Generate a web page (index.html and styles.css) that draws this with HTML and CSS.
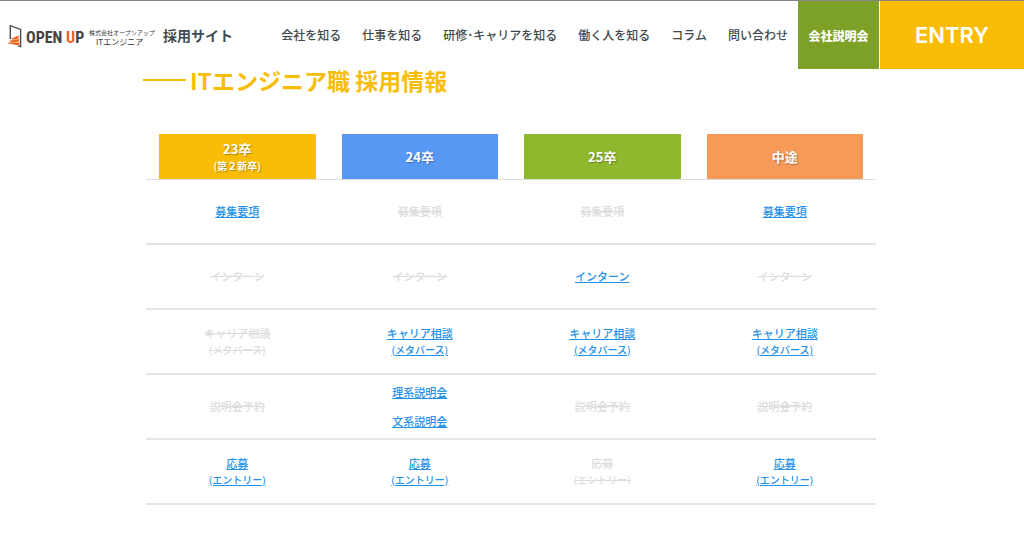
FILE: index.html
```html
<!DOCTYPE html>
<html lang="ja">
<head>
<meta charset="utf-8">
<meta name="viewport" content="width=device-width, initial-scale=1">
<title>ITエンジニア職 採用情報</title>
<link rel="stylesheet" href="styles.css">
</head>
<body>
<header class="header">
  <a class="brand" href="#">
    <svg class="brand-mark" viewBox="0 0 14 24" aria-hidden="true">
      <path d="M2.3 15V1.7L12.6 5.4V22.6L10 21.8" fill="none" stroke="#4a4a4c" stroke-width="1.4"/>
      <path d="M10.6 11.6V14.4L4.8 15.8L3.2 14.8Z" fill="#f0601e"/>
      <path d="M11 15V17.6L3.2 18.2L1.2 16.8Z" fill="#f0601e"/>
      <path d="M11.4 18.4V21.6L.2 19.6V18.6Z" fill="#f0601e"/>
    </svg>
    <span class="brand-name">OPEN <span class="brand-accent">U</span>P</span>
    <span class="company"><span class="company-top">株式会社オープンアップ</span><span class="company-bottom">ITエンジニア</span></span>
    <span class="site-name">採用サイト</span>
  </a>
  <nav class="nav">
    <a href="#">会社を知る</a>
    <a href="#">仕事を知る</a>
    <a href="#">研修･キャリアを知る</a>
    <a href="#">働く人を知る</a>
    <a href="#">コラム</a>
    <a href="#">問い合わせ</a>
  </nav>
  <a class="cta cta-session" href="#">会社説明会</a>
  <a class="cta cta-entry" href="#">ENTRY</a>
</header>
<main class="content">
  <h1 class="title">ITエンジニア職 採用情報</h1>
  <table class="jobs">
    <thead>
      <tr>
        <th scope="col"><div class="tab tab-yellow">23卒<small>(第２新卒)</small></div></th>
        <th scope="col"><div class="tab tab-blue">24卒</div></th>
        <th scope="col"><div class="tab tab-green">25卒</div></th>
        <th scope="col"><div class="tab tab-orange">中途</div></th>
      </tr>
    </thead>
    <tbody>
      <tr>
        <td><a href="#">募集要項</a></td>
        <td><s>募集要項</s></td>
        <td><s>募集要項</s></td>
        <td><a href="#">募集要項</a></td>
      </tr>
      <tr>
        <td><s>インターン</s></td>
        <td><s>インターン</s></td>
        <td><a href="#">インターン</a></td>
        <td><s>インターン</s></td>
      </tr>
      <tr>
        <td><s>キャリア相談<br><small>(メタバース)</small></s></td>
        <td><a href="#">キャリア相談<br><small>(メタバース)</small></a></td>
        <td><a href="#">キャリア相談<br><small>(メタバース)</small></a></td>
        <td><a href="#">キャリア相談<br><small>(メタバース)</small></a></td>
      </tr>
      <tr>
        <td><s>説明会予約</s></td>
        <td><div class="links"><a href="#">理系説明会</a><a href="#">文系説明会</a></div></td>
        <td><s>説明会予約</s></td>
        <td><s>説明会予約</s></td>
      </tr>
      <tr>
        <td><a href="#">応募<br><small>(エントリー)</small></a></td>
        <td><a href="#">応募<br><small>(エントリー)</small></a></td>
        <td><s>応募<br><small>(エントリー)</small></s></td>
        <td><a href="#">応募<br><small>(エントリー)</small></a></td>
      </tr>
    </tbody>
  </table>
</main>
</body>
</html>
```

FILE: styles.css
```css
* {
  box-sizing: border-box;
}

body {
  margin: 0;
  background: #fff;
  color: #3f4a50;
  font-family: "Noto Sans CJK JP", sans-serif;
  font-size: 12px;
}

.header {
  display: flex;
  align-items: stretch;
  min-height: 69px;
  border-top: 1px solid #858585;
  white-space: nowrap;
}

.header a {
  color: inherit;
  text-decoration: none;
}

.brand {
  display: flex;
  align-items: center;
  padding: 2px 0 0 8px;
}

.brand-mark {
  width: 14px;
  height: 24px;
  margin-right: 4px;
}

.brand-name {
  width: 63px;
  padding-top: 3px;
  color: #444;
  font: bold 16px "Liberation Sans Narrow", "Roboto Condensed", sans-serif;
}

.header .brand-accent {
  color: #f0601e;
}

.company {
  display: flex;
  flex-direction: column;
  width: 74px;
  padding-top: 2px;
  color: #333;
}

.company-top {
  font-size: 6px;
  line-height: 8px;
}

.company-bottom {
  padding-left: 7px;
  font-size: 8px;
  line-height: 9px;
}

.site-name {
  padding-bottom: 3px;
  font-size: 14px;
  font-weight: 700;
}

.nav {
  display: flex;
  flex: 1;
  align-items: center;
  justify-content: flex-end;
  gap: 21px;
  padding: 0 10px 1px 0;
  font-weight: 500;
}

.cta {
  display: flex;
  align-items: center;
  justify-content: center;
}

.header .cta {
  color: #fff;
}

.cta-session {
  width: 81px;
  background: #7da127;
  font-weight: 900;
}

.cta-entry {
  width: 144px;
  margin-left: 1px;
  background: #f9bd05;
  font-family: Inter, sans-serif;
  font-size: 22px;
  font-weight: 600;
}

.content {
  max-width: 740px;
  margin: 0 auto;
  padding: 0 6px 0 4px;
}

.title {
  display: flex;
  align-items: center;
  gap: 4px;
  margin: 0 0 43px -3px;
  color: #f9bd05;
  font-size: 23px;
  font-weight: 700;
  line-height: 22px;
}

.title::before {
  width: 43px;
  height: 2px;
  background: #f9bd05;
  content: "";
}

.jobs {
  width: 100%;
  border-collapse: separate;
  border-spacing: 0;
  table-layout: fixed;
  font-size: 11px;
  font-weight: 500;
  line-height: 16px;
  text-align: center;
}

.jobs th {
  padding: 0 13px;
  border-bottom: 1px solid #ddd;
}

.jobs td {
  height: 65px;
  padding: 0 0 1px;
  border-bottom: 2px solid #e4e4e4;
  vertical-align: middle;
}

.jobs a {
  color: #2491e9;
}

.jobs s {
  color: #ddd;
}

.jobs small {
  font-size: 10px;
}

.links {
  display: flex;
  flex-direction: column;
  align-items: center;
  gap: 13px;
}

.tab {
  display: flex;
  flex-direction: column;
  align-items: center;
  justify-content: center;
  min-height: 45px;
  color: #fff;
  font-size: 13px;
  font-weight: 700;
  line-height: 17px;
  text-shadow: 1px 1px 1px rgba(0, 0, 0, 0.3);
}

.tab-yellow {
  background: #f9bd05;
}

.tab-blue {
  background: #5898f5;
}

.tab-green {
  background: #90b82f;
}

.tab-orange {
  background: #f59a57;
}
```
